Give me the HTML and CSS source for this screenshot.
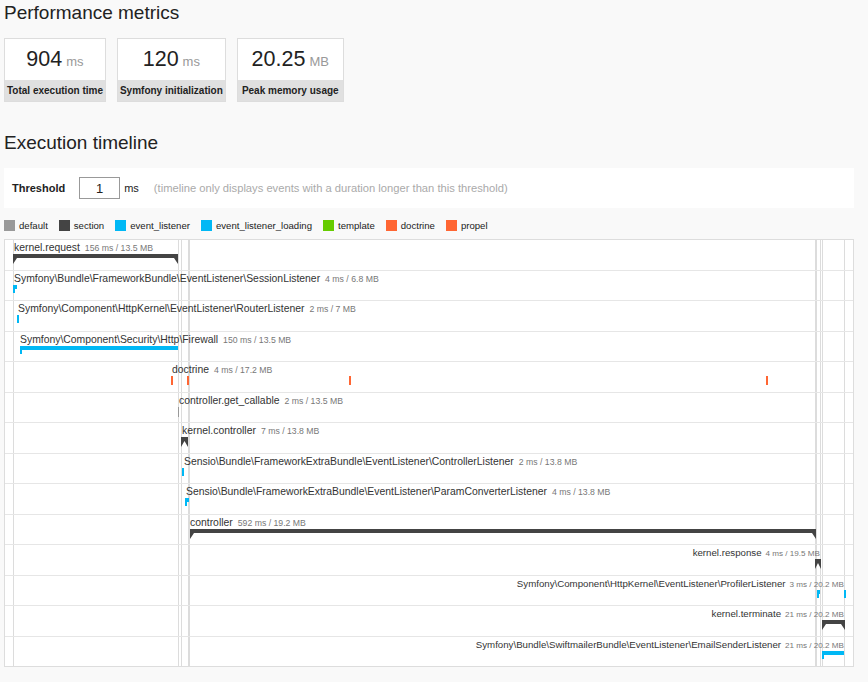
FILE: index.html
```html
<!DOCTYPE html>
<html>
<head>
<meta charset="utf-8">
<link rel="stylesheet" href="styles.css">
</head>
<body>
<h2 class="title">Performance metrics</h2>
<div class="metrics">
  <div class="metric">
    <div class="metric-value">904<span class="unit">ms</span></div>
    <div class="metric-label">Total execution time</div>
  </div>
  <div class="metric">
    <div class="metric-value">120<span class="unit">ms</span></div>
    <div class="metric-label">Symfony initialization</div>
  </div>
  <div class="metric metric-memory">
    <div class="metric-value">20.25<span class="unit">MB</span></div>
    <div class="metric-label">Peak memory usage</div>
  </div>
</div>

<h2 class="title title-timeline">Execution timeline</h2>
<div class="threshold">
  <label class="threshold-label" for="thr">Threshold</label>
  <input id="thr" class="threshold-input" type="text" value="1">
  <span class="threshold-unit">ms</span>
  <span class="threshold-note">(timeline only displays events with a duration longer than this threshold)</span>
</div>

<div class="legend">
  <span class="legend-item"><i class="sw c-default"></i>default</span>
  <span class="legend-item"><i class="sw c-section"></i>section</span>
  <span class="legend-item"><i class="sw c-listener"></i>event_listener</span>
  <span class="legend-item"><i class="sw c-listener"></i>event_listener_loading</span>
  <span class="legend-item"><i class="sw c-template"></i>template</span>
  <span class="legend-item"><i class="sw c-doctrine"></i>doctrine</span>
  <span class="legend-item"><i class="sw c-doctrine"></i>propel</span>
</div>

<div class="timeline">
  <span class="vline" style="left:8px"></span>
  <span class="vline" style="left:173px"></span>
  <span class="vline" style="left:176px"></span>
  <span class="vline vline-thick" style="left:183px"></span>
  <span class="vline vline-thick" style="left:810px"></span>
  <span class="vline" style="left:815px"></span>
  <span class="vline" style="left:817px"></span>
  <span class="vline" style="left:839px"></span>

  <div class="row row-first">
    <div class="lbl" style="left:9px">kernel.request<small>156 ms / 13.5 MB</small></div>
    <svg class="sec" style="left:8px" width="165" height="10" viewBox="0 0 165 10"><path d="M0 0H165V10L161 4H4L0 10Z"/></svg>
  </div>
  <div class="row">
    <div class="lbl" style="left:9px">Symfony\Bundle\FrameworkBundle\EventListener\SessionListener<small>4 ms / 6.8 MB</small></div>
    <span class="ev" style="left:8px;width:4px"></span>
  </div>
  <div class="row">
    <div class="lbl" style="left:13px">Symfony\Component\HttpKernel\EventListener\RouterListener<small>2 ms / 7 MB</small></div>
    <span class="ev" style="left:12px;width:2px"></span>
  </div>
  <div class="row">
    <div class="lbl" style="left:15px">Symfony\Component\Security\Http\Firewall<small>150 ms / 13.5 MB</small></div>
    <span class="ev" style="left:15px;width:158px"></span>
  </div>
  <div class="row">
    <div class="lbl" style="left:167px">doctrine<small>4 ms / 17.2 MB</small></div>
    <span class="tick" style="left:166px"></span>
    <span class="tick" style="left:182px"></span>
    <span class="tick" style="left:344px"></span>
    <span class="tick" style="left:761px"></span>
  </div>
  <div class="row">
    <div class="lbl" style="left:174px">controller.get_callable<small>2 ms / 13.5 MB</small></div>
    <span class="tick tick-default" style="left:173px"></span>
  </div>
  <div class="row">
    <div class="lbl" style="left:177px">kernel.controller<small>7 ms / 13.8 MB</small></div>
    <svg class="sec" style="left:176px" width="7" height="10" viewBox="0 0 7 10"><path d="M0 0H7V10L3.5 4L0 10Z"/></svg>
  </div>
  <div class="row">
    <div class="lbl" style="left:179px">Sensio\Bundle\FrameworkExtraBundle\EventListener\ControllerListener<small>2 ms / 13.8 MB</small></div>
    <span class="ev" style="left:177px;width:2px"></span>
  </div>
  <div class="row">
    <div class="lbl" style="left:181px">Sensio\Bundle\FrameworkExtraBundle\EventListener\ParamConverterListener<small>4 ms / 13.8 MB</small></div>
    <span class="ev" style="left:180px;width:4px"></span>
  </div>
  <div class="row">
    <div class="lbl" style="left:185px">controller<small>592 ms / 19.2 MB</small></div>
    <svg class="sec" style="left:185px" width="626" height="10" viewBox="0 0 626 10"><path d="M0 0H626V10L622 4H4L0 10Z"/></svg>
  </div>
  <div class="row">
    <div class="lbl lbl-end" style="right:33px">kernel.response<small>4 ms / 19.5 MB</small></div>
    <svg class="sec" style="left:810px" width="6" height="10" viewBox="0 0 6 10"><path d="M0 0H6V10L3 4L0 10Z"/></svg>
  </div>
  <div class="row">
    <div class="lbl lbl-end" style="right:9px">Symfony\Component\HttpKernel\EventListener\ProfilerListener<small>3 ms / 20.2 MB</small></div>
    <span class="ev" style="left:812px;width:3px"></span>
    <span class="ev" style="left:839px;width:2px"></span>
  </div>
  <div class="row">
    <div class="lbl lbl-end" style="right:9px">kernel.terminate<small>21 ms / 20.2 MB</small></div>
    <svg class="sec" style="left:817px" width="23" height="10" viewBox="0 0 23 10"><path d="M0 0H23V10L19 4H4L0 10Z"/></svg>
  </div>
  <div class="row">
    <div class="lbl lbl-end" style="right:9px">Symfony\Bundle\SwiftmailerBundle\EventListener\EmailSenderListener<small>21 ms / 20.2 MB</small></div>
    <span class="ev" style="left:817px;width:22px"></span>
  </div>
</div>
</body>
</html>
```

FILE: styles.css
```css
* { box-sizing: border-box; }

body {
  margin: 0;
  padding: 0 4px;
  background: #f9f9f9;
  font-family: "Liberation Sans", Arial, sans-serif;
  color: #222;
}

.title {
  margin: 1px 0 0;
  font-size: 19px;
  line-height: 24px;
  font-weight: normal;
  color: #222;
}

.title-timeline { margin-top: 29px; }

.metrics {
  display: flex;
  gap: 11px;
  margin-top: 13px;
}

.metric {
  background: #fff;
  border: 1px solid #ddd;
  text-align: center;
}

.metric-memory { width: 107px; }

.metric-value {
  height: 41px;
  line-height: 41px;
  font-size: 21.5px;
  color: #222;
}

.unit {
  font-size: 13px;
  color: #999;
  margin-left: 4px;
}

.metric-label {
  background: #e0e0e0;
  height: 21px;
  line-height: 21px;
  font-size: 10px;
  font-weight: bold;
  padding: 0 2px;
  white-space: nowrap;
}

.threshold {
  margin-top: 13px;
  width: 850px;
  height: 40px;
  background: #fff;
  display: flex;
  align-items: center;
  padding-left: 8px;
  font-size: 11px;
}

.threshold-label {
  font-weight: bold;
  margin-right: 14px;
}

.threshold-input {
  width: 41px;
  height: 22px;
  border: 1px solid #999;
  padding: 0;
  margin: 0;
  font-family: "Liberation Sans", Arial, sans-serif;
  font-size: 13px;
  text-align: center;
  color: #222;
  background: #fff;
}

.threshold-unit { margin-left: 4px; }

.threshold-note {
  margin-left: 15px;
  font-size: 11.2px;
  color: #aaa;
}

.legend {
  margin: 12px 0 8px;
  height: 11px;
  display: flex;
  align-items: center;
  font-size: 9.6px;
  line-height: 11px;
  color: #222;
}

.legend-item {
  display: flex;
  align-items: center;
  margin-right: 11px;
}

.sw {
  display: inline-block;
  width: 11px;
  height: 11px;
  margin-right: 4px;
}

.c-default { background: #999; }
.c-section { background: #444; }
.c-listener { background: #00b8f5; }
.c-template { background: #66cc00; }
.c-doctrine { background: #ff6633; }

.timeline {
  position: relative;
  width: 850px;
  background: #fff;
  border: 1px solid #ddd;
  border-top: none;
}

.vline {
  position: absolute;
  top: 0;
  bottom: 0;
  width: 1px;
  background: #dcdcdc;
}

.vline-thick { width: 2px; }

.row {
  position: relative;
  height: 30.5px;
  border-top: 1px solid #e6e6e6;
}

.row-first { border-top-color: #ddd; }

.lbl {
  position: absolute;
  top: 2px;
  white-space: nowrap;
  font-size: 10.4px;
  line-height: 12px;
  color: #333;
}

.lbl small {
  font-size: 8.7px;
  color: #777;
  margin-left: 5px;
}

.lbl-end { font-size: 9.7px; }

.lbl-end small {
  font-size: 8.1px;
  margin-left: 4px;
}

.sec {
  position: absolute;
  top: 14px;
  fill: #444;
  display: block;
}

.ev {
  position: absolute;
  top: 14px;
  height: 4px;
  background: #00b8f5;
}

.ev::before {
  content: "";
  position: absolute;
  left: 0;
  top: 0;
  width: 2px;
  height: 8px;
  background: #00b8f5;
}

.tick {
  position: absolute;
  top: 14px;
  width: 2px;
  height: 9px;
  background: #ff6633;
}

.tick-default {
  width: 1px;
  height: 10px;
  background: #999;
}
```
